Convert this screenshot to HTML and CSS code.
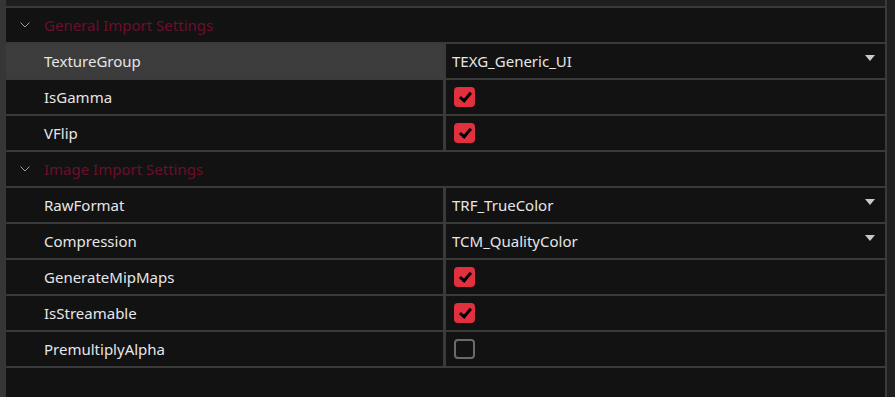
FILE: index.html
```html
<!DOCTYPE html>
<html lang="en">
<head>
    <meta charset="UTF-8">
    <title>Texture Import Settings</title>
    <link rel="stylesheet" href="styles.css">
</head>
<body>
    <div class="window">
        <div class="gutter"></div>
        <div class="grid-area">
            <div class="top"></div>

            <div class="row header">
                <svg class="chevron" width="10" height="6" viewBox="0 0 10 6"><path d="M0.5 0.5 L5 5 L9.5 0.5" fill="none" stroke="#9a9a9a" stroke-width="1"/></svg>
                <span>General Import Settings</span>
            </div>
            <div class="row">
                <div class="name selected">TextureGroup</div>
                <div class="value combo">TEXG_Generic_UI<span class="arrow"></span></div>
            </div>
            <div class="row">
                <div class="name">IsGamma</div>
                <div class="value"><span class="check on"></span></div>
            </div>
            <div class="row">
                <div class="name">VFlip</div>
                <div class="value"><span class="check on"></span></div>
            </div>

            <div class="row header">
                <svg class="chevron" width="10" height="6" viewBox="0 0 10 6"><path d="M0.5 0.5 L5 5 L9.5 0.5" fill="none" stroke="#9a9a9a" stroke-width="1"/></svg>
                <span>Image Import Settings</span>
            </div>
            <div class="row">
                <div class="name">RawFormat</div>
                <div class="value combo">TRF_TrueColor<span class="arrow"></span></div>
            </div>
            <div class="row">
                <div class="name">Compression</div>
                <div class="value combo">TCM_QualityColor<span class="arrow"></span></div>
            </div>
            <div class="row">
                <div class="name">GenerateMipMaps</div>
                <div class="value"><span class="check on"></span></div>
            </div>
            <div class="row">
                <div class="name">IsStreamable</div>
                <div class="value"><span class="check on"></span></div>
            </div>
            <div class="row">
                <div class="name">PremultiplyAlpha</div>
                <div class="value"><span class="check"></span></div>
            </div>

            <div class="fill"></div>
        </div>
    </div>
</body>
</html>
```
FILE: styles.css
```css
body { margin: 0; background: #1f1f1f; font-family: "Noto Sans", "Open Sans", sans-serif; font-size: 15px; color: #e6e6e6; overflow: hidden; }
.window { display: flex; height: 397px; }
.gutter { width: 6px; background: #363636; }
.grid-area { width: 879px; border-right: 2px solid #3a3a3a; display: flex; flex-direction: column; }
.top { height: 6px; background: #1e1e1e; border-bottom: 2px solid #3a3a3a; }
.row { height: 34px; border-bottom: 2px solid #3a3a3a; background: #121212; display: grid; grid-template-columns: 440px 439px; }
.row .name { padding-left: 38px; display: flex; align-items: center; border-right: 3px solid #3a3a3a; }
.row .name.selected { background: #3c3c3c; }
.row .value { padding-left: 6px; display: flex; align-items: center; position: relative; }
.header { display: flex; align-items: center; color: #6c0f2c; }
.header .chevron { margin-left: 14px; margin-right: 14px; }
.combo .arrow { position: absolute; right: 10px; top: 11px; width: 0; height: 0; border-left: 5.5px solid transparent; border-right: 5.5px solid transparent; border-top: 6px solid #c8c8c8; }
.check { width: 17px; height: 16px; margin-left: 2px; border: 2px solid #6a6a6a; border-radius: 4px; box-sizing: content-box; position: relative; }
.check.on { background: #e1303e; border-color: #e1303e; }
.check.on::after { content: ""; position: absolute; left: 6px; top: 1px; width: 4px; height: 9px; border: solid #000; border-width: 0 3px 3px 0; transform: rotate(40deg); }
.fill { flex: 1; background: #121212; }
```
